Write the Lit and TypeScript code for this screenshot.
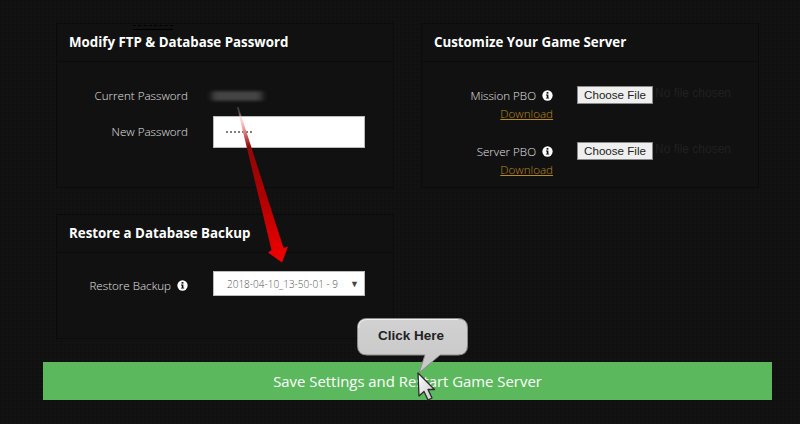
import { LitElement, html, css, svg } from "lit";
import { customElement } from "lit/decorators.js";

const infoIcon = html`<svg class="info" viewBox="0 0 12 12" aria-hidden="true">
  <circle cx="6" cy="6" r="5.6" fill="#fff"></circle>
  <rect x="5" y="2.2" width="2" height="1.8" fill="#111"></rect>
  <path d="M4.3 5h2.7v3.4h.9v1H4.3v-1h.9V6h-.9z" fill="#111"></path>
</svg>`;

const overlay = svg`
  <defs>
    <linearGradient id="shaft" gradientUnits="userSpaceOnUse" x1="238" y1="112" x2="280" y2="258">
      <stop offset="0" stop-color="#ffd0d0" stop-opacity="0.25"></stop>
      <stop offset="0.1" stop-color="#f7b0b0"></stop>
      <stop offset="0.24" stop-color="#8e0808"></stop>
      <stop offset="0.6" stop-color="#b00000"></stop>
      <stop offset="1" stop-color="#f00000"></stop>
    </linearGradient>
    <linearGradient id="bubble" x1="0" y1="0" x2="0" y2="1">
      <stop offset="0" stop-color="#d2d2d2"></stop>
      <stop offset="1" stop-color="#c6c6c6"></stop>
    </linearGradient>
    <linearGradient id="ptr" x1="0" y1="0" x2="1" y2="1">
      <stop offset="0" stop-color="#ffffff"></stop>
      <stop offset="1" stop-color="#c8c8c8"></stop>
    </linearGradient>
  </defs>
  <path d="M237 107 L271.500 250 L268 252.500 L282 262.500 L288 246.500 L283.500 248 L238.500 107 Z" fill="url(#shaft)"></path>
  <path d="M357.500 328 Q357.500 318.500 367 318.500 L458 318.500 Q467.500 318.500 467.500 328 L467.500 345.500 Q467.500 355 458 355 L440 355 L419 373 L425 355 L367 355 Q357.500 355 357.500 345.500 Z" fill="url(#bubble)" stroke="#8a8a8a" stroke-width="1"></path>
  <path d="M358.500 328 Q358.500 319.500 367 319.500 L458 319.500" fill="none" stroke="#f0f0f0" stroke-width="1"></path>
  <path d="M418 373 L419 396 L424 391.500 L428 400 L432 398 L428 389.500 L434.500 389.500 Z" fill="url(#ptr)" stroke="#2a2a2a" stroke-width="1.300" stroke-linejoin="round"></path>
`;

@customElement("app-root")
export class AppRoot extends LitElement {
  static styles = css`
    :host {
      display: block;
      width: 800px;
      height: 424px;
      overflow: hidden;
      position: relative;
      background-color: #121212;
      background-image: radial-gradient(circle at 1px 1px, #0f0f0f 1px, transparent 1.2px);
      background-size: 4px 4px;
      font-family: "Open Sans", sans-serif;
      color: #c9c9c9;
    }
    .page {
      box-sizing: border-box;
      height: 424px;
      padding: 23px 28px 0 43px;
      display: flex;
      flex-direction: column;
    }
    .columns {
      display: grid;
      grid-template-columns: 338px 338px;
      column-gap: 27px;
      row-gap: 26px;
      padding-left: 13px;
      height: 314px;
      align-content: start;
    }
    .panel {
      box-sizing: border-box;
      border: 1px solid #0b0b0b;
      background: #111;
      display: flex;
      flex-direction: column;
    }
    .panel.tall { height: 165px; }
    .panel.short { height: 125px; }
    .panel h2 {
      margin: 0;
      height: 38px;
      box-sizing: border-box;
      padding: 0 12px;
      font-size: 13.300px;
      line-height: 36px;
      font-weight: 700;
      color: #fff;
      border-bottom: 1px solid #0b0b0b;
    }
    .body {
      display: flex;
      flex-direction: column;
    }
    .row {
      display: flex;
      align-items: center;
    }
    .label {
      width: 131px;
      text-align: right;
      font-size: 11.600px;
      font-weight: 300;
      line-height: 16px;
      color: #e2e2e2;
      white-space: nowrap;
    }
    .control { margin-left: 25px; }
    .pw { padding-top: 26px; }
    .current {
      height: 16px;
      width: 50px;
      margin: 0 0 0 24px;
      background: #444;
      filter: blur(3px);
      transform: scale(1, 0.6);
    }
    .new { margin-top: 12px; }
    .text-box {
      box-sizing: border-box;
      width: 152px;
      height: 32px;
      background: #fff;
      border: 1px solid #bbb;
      padding-left: 12px;
      display: flex;
      align-items: center;
    }
    .dots { display: flex; gap: 2px; }
    .dots i { flex: none; width: 2px; height: 2px; border-radius: 1px; background: #555; }
    .restore { padding-top: 22px; }
    .restore .control { margin-top: -4px; }
    .select {
      box-sizing: border-box;
      width: 152px;
      height: 25px;
      background: #fff;
      border: 1px solid #bbb;
      display: flex;
      align-items: center;
      justify-content: space-between;
      padding: 0 5px 0 13px;
      color: #555;
      font-size: 10px;
      font-weight: 300;
      white-space: nowrap;
    }
    .select span { font-size: 9px; color: #444; }
    .info {
      width: 11px;
      height: 11px;
      margin-left: 6px;
      vertical-align: -1px;
    }
    .custom { padding-top: 24px; gap: 20px; }
    .file-row { display: flex; align-items: flex-start; }
    .file-label {
      width: 131px;
      padding-top: 1px;
      text-align: right;
      font-size: 11.600px;
      font-weight: 300;
      line-height: 18px;
      color: #e2e2e2;
    }
    .file-label a {
      display: block;
      color: #bb8a20;
      text-decoration: underline;
      line-height: 17px;
    }
    .choose {
      box-sizing: border-box;
      margin-left: 24px;
      height: 18px;
      width: 76px;
      background: #efefef;
      border: 1px solid #8a8a8a;
      font-family: "Liberation Sans", sans-serif;
      font-size: 11.600px;
      line-height: 16px;
      color: #222;
      text-align: center;
      padding: 0;
    }
    .nofile {
      margin-left: 2px;
      font-family: "Liberation Sans", sans-serif;
      font-size: 12px;
      line-height: 15px;
      color: #202020;
    }
    .save {
      box-sizing: border-box;
      width: 729px;
      height: 38px;
      margin: 25px 0 0;
      border: 0;
      background: #5cb85c;
      color: #fff;
      font-family: "Open Sans", sans-serif;
      font-size: 14.900px;
      line-height: 38px;
      text-align: center;
      padding: 0;
    }
    .mark {
      position: absolute;
      left: 133px;
      top: 25px;
      width: 40px;
      height: 3px;
      border-top: 1px dashed #000;
      border-bottom: 1px solid #000;
    }
    .overlay {
      position: absolute;
      inset: 0;
      width: 800px;
      height: 424px;
      pointer-events: none;
    }
    .callout {
      position: absolute;
      left: 356px;
      top: 327px;
      width: 110px;
      text-align: center;
      font-family: "Liberation Sans", sans-serif;
      font-weight: 700;
      font-size: 13.500px;
      line-height: 18px;
      color: #222;
    }
  `;

  render() {
    return html`
      <div class="page">
        <div class="columns">
          <section class="panel tall">
            <h2>Modify FTP &amp; Database Password</h2>
            <div class="body pw">
              <div class="row">
                <div class="label">Current Password</div>
                <div class="current"></div>
              </div>
              <div class="row new">
                <div class="label">New Password</div>
                <div class="control text-box">
                  <div class="dots">${[0, 1, 2, 3, 4, 5, 6].map(() => html`<i></i>`)}</div>
                </div>
              </div>
            </div>
          </section>
          <section class="panel tall">
            <h2>Customize Your Game Server</h2>
            <div class="body custom">
              ${["Mission PBO", "Server PBO"].map(
                (name) => html`
                  <div class="file-row">
                    <div class="file-label">
                      ${name}${infoIcon}
                      <a href="#">Download</a>
                    </div>
                    <button class="choose">Choose File</button>
                    <div class="nofile">No file chosen</div>
                  </div>
                `
              )}
            </div>
          </section>
          <section class="panel short">
            <h2>Restore a Database Backup</h2>
            <div class="body restore">
              <div class="row">
                <div class="label">Restore Backup${infoIcon}</div>
                <div class="control select">2018-04-10_13-50-01 - 9 <span>▼</span></div>
              </div>
            </div>
          </section>
        </div>
        <button class="save">Save Settings and Restart Game Server</button>
      </div>
      <div class="mark"></div>
      <svg class="overlay" viewBox="0 0 800 424">${overlay}</svg>
      <div class="callout">Click Here</div>
    `;
  }
}
